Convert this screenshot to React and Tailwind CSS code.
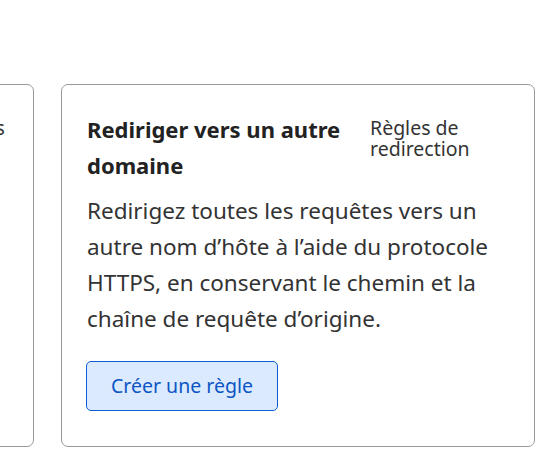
import React from 'react'

const font = { fontFamily: '"Segoe UI", "Noto Sans", sans-serif' }

const RuleCard = ({ title, tag, description, action }) => {
    return (
        <div className="w-[474px] h-[363px] shrink-0 border border-[#999] rounded-[7px] bg-white px-[25px] pt-[26px] pb-6 flex flex-col">
            <div className="flex gap-4">
                <h3 className="flex-1 text-[22px] leading-[36px] font-bold text-[#222]">{title}</h3>
                <span className="w-[139px] shrink-0 pt-[6px] text-[19.5px] leading-[21px] text-[#333]">{tag}</span>
            </div>
            <p className="mt-[10px] text-[22.5px] leading-[36px] text-[#333]">{description}</p>
            <div className="mt-[24px] -ml-px">
                <button className="h-[50px] px-[24px] rounded-[5px] border border-[#0b5cd5] bg-[#dbeafe] text-[19.5px] text-[#0b55c4]">
                    {action}
                </button>
            </div>
        </div>
    )
}

const App = () => {
    return (
        <div className="w-[549px] h-[462px] overflow-hidden bg-white pt-[84px]" style={font}>
            <div className="flex gap-[27px] ml-[-440px]">
                <RuleCard
                    title="Transférer une URL"
                    tag="Configurations de pages"
                    description="Redirigez une URL précise vers une autre adresse."
                    action="Créer une règle"
                />
                <RuleCard
                    title="Rediriger vers un autre domaine"
                    tag="Règles de redirection"
                    description="Redirigez toutes les requêtes vers un autre nom d’hôte à l’aide du protocole HTTPS, en conservant le chemin et la chaîne de requête d’origine."
                    action="Créer une règle"
                />
            </div>
        </div>
    )
}

export default App
